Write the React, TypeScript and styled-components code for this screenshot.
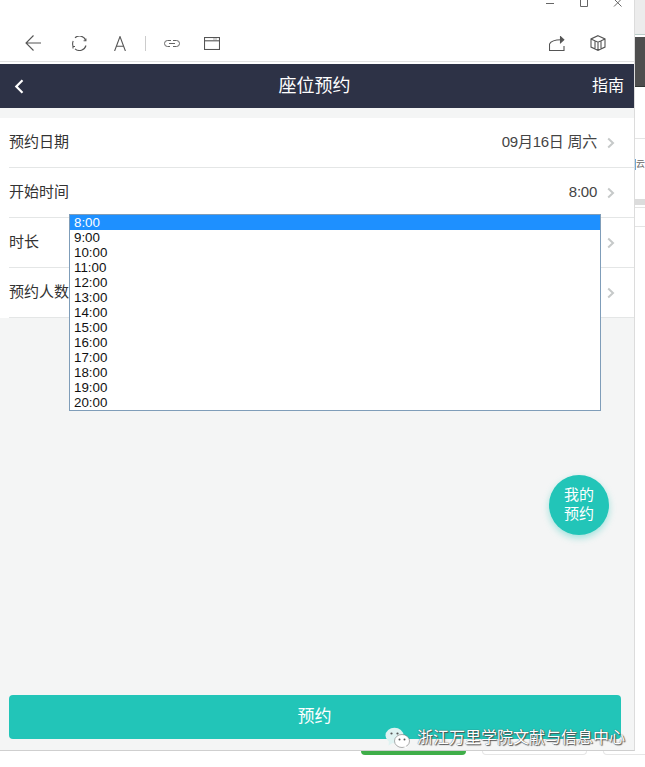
import React from "react";
import styled, { createGlobalStyle } from "styled-components";

const Global = createGlobalStyle`
  html, body { margin: 0; padding: 0; background: #fff; }
  body { font-family: "Liberation Sans", "Noto Sans CJK SC", sans-serif; }
  * { box-sizing: border-box; }
`;

const Page = styled.div`
  position: relative;
  width: 645px;
  height: 767px;
  overflow: hidden;
  display: flex;
  background: #fff;
`;

const Win = styled.div`
  position: relative;
  width: 635px;
  height: 751px;
  flex: none;
  display: flex;
  flex-direction: column;
  background: #fff;
  border-right: 1px solid #dcdcdc;
  border-bottom: 1px solid #cfcfcf;
`;

const Strip = styled.div`
  flex: 1;
  min-width: 0;
  display: flex;
  flex-direction: column;
  background: #fff;
`;
const StripTop = styled.div`
  height: 35px;
  background: #ececec;
  border-bottom: 1px solid #b9ccc8;
`;
const StripDark = styled.div`
  height: 50px;
  margin-top: 2px;
  background: #4e4e4e;
  border-bottom: 1px solid #2f3533;
`;
const StripRule = styled.div<{ $m: number }>`
  margin-top: ${(p) => p.$m}px;
  height: 1px;
  background: #e4e4e4;
`;
const StripText = styled.div`
  margin-top: 20px;
  height: 11px;
  font-size: 9px;
  line-height: 11px;
  color: #666;
  white-space: nowrap;
  border-left: 1px solid #6fa8d8;
`;
const StripBar = styled.div`
  margin-top: 29px;
  height: 6px;
  background: #dcdcdc;
`;

const WinControls = styled.div`
  height: 13px;
  flex: none;
  display: flex;
  justify-content: flex-end;
  align-items: flex-start;
  gap: 24px;
  padding-right: 11px;
`;

const Toolbar = styled.div`
  height: 48px;
  flex: none;
  display: flex;
  align-items: center;
  padding: 12px 0 0 25px;
`;
const ToolGap = styled.div<{ $w: number }>`
  width: ${(p) => p.$w}px;
  flex: none;
`;
const ToolSep = styled.div`
  width: 1px;
  height: 15px;
  background: #ccc;
  flex: none;
`;
const Spacer = styled.div`
  flex: 1;
`;

const ToolRule = styled.div`
  height: 3px;
  flex: none;
  background: #fff;
  border-top: 1px solid #e2e2e2;
`;

const Nav = styled.div`
  height: 44px;
  flex: none;
  width: 634px;
  background: #2d3246;
  color: #fff;
  display: flex;
  align-items: center;
  justify-content: space-between;
  padding: 0 10px 0 14px;
`;
const NavTitle = styled.div`
  flex: 1;
  text-align: center;
  font-size: 18px;
  line-height: 20px;
  padding-right: 9px;
`;
const NavSide = styled.div`
  width: 32px;
  flex: none;
  display: flex;
  align-items: center;
  font-size: 16px;
  line-height: 20px;
`;

const Body = styled.div`
  flex: 1;
  display: flex;
  flex-direction: column;
  background: #f4f5f5;
  padding-top: 10px;
`;

const List = styled.div`
  background: #fff;
  padding-left: 9px;
  flex: none;
`;

const Row = styled.div`
  height: 50px;
  display: flex;
  align-items: center;
  justify-content: space-between;
  padding: 0 19px 0 0;
  border-bottom: 1px solid #e4e6e6;
  font-size: 15px;
  color: #333;
`;
const RowText = styled.span`
  line-height: 20px;
  padding-bottom: 1px;
`;
const RowValue = styled.div`
  display: flex;
  align-items: center;
  gap: 10px;
  color: #444;
  letter-spacing: -0.25px;
`;

const Submit = styled.div`
  margin: auto 13px 11px 9px;
  height: 44px;
  border-radius: 4px;
  background: #22c5b8;
  color: #fff;
  font-size: 17px;
  line-height: 20px;
  display: flex;
  align-items: center;
  justify-content: center;
  padding: 0 1px 0 0;
`;

const Drop = styled.div`
  position: absolute;
  left: 69px;
  top: 214px;
  width: 532px;
  height: 197px;
  background: #fff;
  border: 1px solid #7f9db9;
  font-size: 13.33px;
  color: #111;
`;
const Opt = styled.div<{ $on?: boolean }>`
  height: 15px;
  line-height: 15px;
  padding-left: 4px;
  background: ${(p) => (p.$on ? "#1e90ff" : "transparent")};
  color: ${(p) => (p.$on ? "#fff" : "#111")};
`;

const Fab = styled.div`
  position: absolute;
  left: 549px;
  top: 475px;
  width: 60px;
  height: 60px;
  border-radius: 50%;
  background: #22c5b8;
  box-shadow: 0 3px 7px rgba(34, 197, 184, 0.4);
  color: #fff;
  font-size: 15px;
  line-height: 19px;
  display: flex;
  align-items: center;
  justify-content: center;
  text-align: center;
  padding-bottom: 2px;
`;

const Mark = styled.div`
  position: absolute;
  left: 385px;
  top: 725px;
  display: flex;
  align-items: center;
  gap: 7px;
  font-size: 16px;
  line-height: 26px;
  color: #fff;
  white-space: nowrap;
  text-shadow: 0 0 1px #333, 1px 1px 1px #555;
`;

const Tabs = styled.div`
  position: absolute;
  top: 751px;
  left: 361px;
  display: flex;
  gap: 16px;
`;
const TabPill = styled.div<{ $green?: boolean }>`
  width: 105px;
  height: 4px;
  border-radius: 0 0 4px 4px;
  background: ${(p) => (p.$green ? "#3fae49" : "#fff")};
  border: ${(p) => (p.$green ? "none" : "1px solid #e6e6e6")};
  border-top: none;
`;

const Chevron = () => (
  <svg width="8" height="12" viewBox="0 0 8 12" fill="none" stroke="#c6c9c9" strokeWidth="2">
    <path d="M1.200 1.500L6 6l-4.800 4.500" />
  </svg>
);

const items: [string, string][] = [
  ["预约日期", "09月16日 周六"],
  ["开始时间", "8:00"],
  ["时长", ""],
  ["预约人数", ""],
];
const times = ["8:00","9:00","10:00","11:00","12:00","13:00","14:00","15:00","16:00","17:00","18:00","19:00","20:00"];

export default function App() {
  return (
    <Page>
      <Global />
      <Win>
        <WinControls>
          <svg width="10" height="13" viewBox="0 0 10 13" stroke="#666" fill="none"><path d="M1 3.500h8" /></svg>
          <svg width="10" height="13" viewBox="0 0 10 13" stroke="#666" fill="none"><path d="M1.500 0v6.500h7V0" /></svg>
          <svg width="10" height="13" viewBox="0 0 10 13" stroke="#666" fill="none"><path d="M1 -1l7.500 7.500M8.500 -1L1 6.500" /></svg>
        </WinControls>
        <Toolbar>
          <svg width="16" height="16" viewBox="0 0 16 16" fill="none" stroke="#555" strokeWidth="1.1"><path d="M16 8H1M8.500 .5L1 8l7.500 7.500" /></svg>
          <ToolGap $w={31} />
          <svg width="15" height="15" viewBox="0 0 15 15" fill="none" stroke="#555" strokeWidth="1.1"><path d="M3 1.800A6.500 6.500 0 0 1 13.600 4.300M14 9.500A6.800 6.800 0 0 1 3 12.800M1 10A6.800 6.800 0 0 1 1.200 5" /><path d="M13.900 2.500v2.300h-2.300M1 12.500v-2h2" /></svg>
          <ToolGap $w={27} />
          <svg width="12" height="15" viewBox="0 0 12 15" fill="none" stroke="#555" strokeWidth="1.1"><path d="M.6 15L6 .6 11.400 15M2.400 10.200h7.200" /></svg>
          <ToolGap $w={19} />
          <ToolSep />
          <ToolGap $w={18} />
          <svg width="16" height="9" viewBox="0 0 16 9" fill="none" stroke="#666" strokeWidth="1"><path d="M7 1.500H3.500a3 3 0 0 0 0 6H6M9 1.500h3.500a3 3 0 0 1 0 6H9M5 4.500h6" /></svg>
          <ToolGap $w={24} />
          <svg width="16" height="13" viewBox="0 0 16 13" fill="none" stroke="#555" strokeWidth="1.1"><rect x=".5" y=".5" width="15" height="12" /><path d="M.5 3.800h15" /><path d="M9.500 2h4" strokeDasharray="1 1" /></svg>
          <Spacer />
          <svg width="16" height="15" viewBox="0 0 16 15" fill="none" stroke="#555" strokeWidth="1.1"><path d="M.5 8v6.500h14.500V10M.5 8C2 5 5.500 3.800 12 3.800" /><path d="M11.500 .7l3.300 3-3.300 3z" fill="#555" /></svg>
          <ToolGap $w={25} />
          <svg width="16" height="16" viewBox="0 0 16 16" fill="none" stroke="#555" strokeWidth="1.1"><path d="M8 .7l7 3.200v8.200l-7 3.200-7-3.200V3.900zM1 3.900l7 3.300 7-3.300M8 7.200v8.100M5 5.600v8.500M11 5.600v8.500" /></svg>
          <ToolGap $w={28} />
        </Toolbar>
        <ToolRule />
        <Nav>
          <NavSide>
            <svg width="10" height="15" viewBox="0 0 10 15" fill="none" stroke="#fff" strokeWidth="2.2"><path d="M8.500 1.200L2.300 7.500l6.200 6.300" /></svg>
          </NavSide>
          <NavTitle>座位预约</NavTitle>
          <NavSide>指南</NavSide>
        </Nav>
        <Body>
          <List>
            {items.map(([k, v]) => (
              <Row key={k}>
                <RowText>{k}</RowText>
                <RowValue>
                  {v && <RowText>{v}</RowText>}
                  <Chevron />
                </RowValue>
              </Row>
            ))}
          </List>
          <Submit>预约</Submit>
        </Body>
      </Win>
      <Strip>
        <StripTop />
        <StripDark />
        <StripRule $m={51} />
        <StripText>云</StripText>
        <StripBar />
        <StripRule $m={2} />
        <StripRule $m={18} />
      </Strip>
      <Drop>
        {times.map((t, i) => (
          <Opt key={t} $on={i === 0}>{t}</Opt>
        ))}
      </Drop>
      <Fab>我的<br />预约</Fab>
      <Tabs>
        <TabPill $green />
        <TabPill />
        <TabPill />
      </Tabs>
      <Mark>
        <svg width="25" height="22" viewBox="0 0 25 22">
          <ellipse cx="9.500" cy="8.500" rx="9" ry="7.800" fill="#dff3f2" />
          <path d="M4 14l-.5 4.500 5-3z" fill="#dff3f2" />
          <ellipse cx="17" cy="14" rx="7.500" ry="6.500" fill="#fff" stroke="#777" strokeWidth=".6" />
          <path d="M21 19l1.500 2.500-4.500-1.500z" fill="#fff" />
          <circle cx="6.500" cy="6.500" r="1.100" fill="#555" />
          <circle cx="12.500" cy="6.500" r="1.100" fill="#555" />
          <circle cx="14.500" cy="12.500" r="1" fill="#555" />
          <circle cx="19.500" cy="12.500" r="1" fill="#555" />
        </svg>
        <span>浙江万里学院文献与信息中心</span>
      </Mark>
    </Page>
  );
}
